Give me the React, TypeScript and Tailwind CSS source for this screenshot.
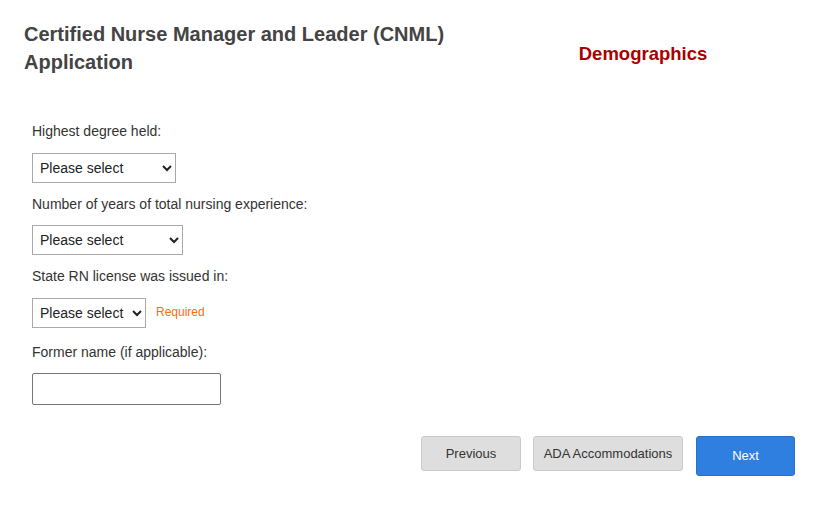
export default function App() {
  const font = { fontFamily: '"Liberation Sans", Arial, sans-serif' };

  return (
    <div className="min-h-[511px] w-[818px] bg-white" style={font}>
      {/* header */}
      <div className="flex pt-[20px]">
        <h1 className="ml-[24px] w-[440px] text-[20px] font-bold leading-[28px] text-[#444444]">
          Certified Nurse Manager and Leader (CNML) Application
        </h1>
        <div className="flex flex-1 justify-center pt-[23px] pl-[4px]">
          <h2 className="text-[18.5px] font-bold leading-[22px] text-[#aa0000]">
            Demographics
          </h2>
        </div>
      </div>

      {/* form */}
      <div className="mt-[47px] flex flex-col pl-[32px] text-[14px] leading-[16px] text-[#333333]">
        <label className="mb-[14px]">Highest degree held:</label>
        <select className="h-[30px] w-[144px] border border-[#aaaaaa] bg-white pl-[3px] text-[14px] text-[#222222]">
          <option>Please select</option>
        </select>

        <label className="mb-[13px] mt-[13px]">
          Number of years of total nursing experience:
        </label>
        <select className="h-[30px] w-[151px] border border-[#aaaaaa] bg-white pl-[3px] text-[14px] text-[#222222]">
          <option>Please select</option>
        </select>

        <label className="mb-[14px] mt-[13px]">State RN license was issued in:</label>
        <div className="flex items-center gap-[10px]">
          <select className="h-[30px] w-[114px] border border-[#aaaaaa] bg-white pl-[3px] text-[14px] text-[#222222]">
            <option>Please select</option>
          </select>
          <span className="pb-[2px] text-[12px] text-[#ff6a13]">Required</span>
        </div>

        <label className="mb-[13px] mt-[16px]">Former name (if applicable):</label>
        <input
          type="text"
          className="h-[32px] w-[189px] rounded-[2px] border border-[#767676] bg-white px-[6px] text-[14px]"
        />
      </div>

      {/* actions */}
      <div className="mt-[31px] flex items-start justify-end gap-[12px] pr-[23px] text-[13px]">
        <button className="h-[35px] w-[100px] rounded-[3px] border border-[#c9c9c9] bg-[#dedede] text-[#333333]">
          Previous
        </button>
        <button className="h-[35px] w-[150px] rounded-[3px] border border-[#c9c9c9] bg-[#dedede] text-[#333333]">
          ADA Accommodations
        </button>
        <button className="ml-[1px] h-[40px] w-[99px] rounded-[3px] border border-[#2a6fc9] bg-[#2f7fe1] text-white">
          Next
        </button>
      </div>
    </div>
  );
}
